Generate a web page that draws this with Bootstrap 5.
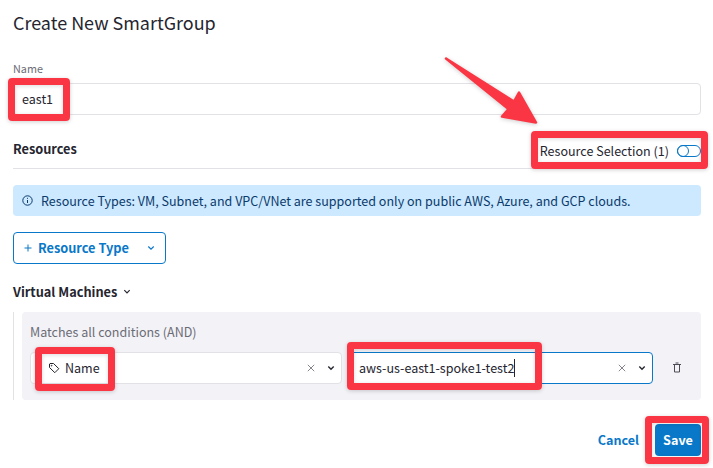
<!DOCTYPE html>
<html lang="en">
<head>
<meta charset="utf-8">
<title>Create New SmartGroup</title>
<link href="https://cdn.jsdelivr.net/npm/bootstrap@5.3.0/dist/css/bootstrap.min.css" rel="stylesheet">
<style>
body{font-family:"Noto Sans CJK SC","Noto Sans",sans-serif;font-size:12.54px;line-height:20px;color:#25252f;width:713px;height:468px;overflow:hidden;background:#fff}
.page{padding:7px 12px 0 13px}
.title{font-size:17.95px;line-height:30px;font-weight:400;margin:0}
.field-label{font-size:10.8px;line-height:16px;color:#6c6c75;margin:23px 0 7px;display:block}
.box-input{height:32px;border:1px solid #e1e1e6;border-radius:4px;padding:0 8px;background:#fff;color:#25252f}
.section-head{height:54px;border-bottom:1px solid #e1e1e6;padding-top:24px}
.section-head .fw-bold,.vm-head,.btn-type{font-size:12.75px}
.selection{margin-top:2px}
.notice{height:31px;margin:16px 0 16px;padding:0 9px;background:#cce9ff;color:#0b3a6b;border:0;border-radius:4px}
.btn-type{width:153px;height:32px;border:1px solid #0a78c8;color:#0a78c8;border-radius:4px;padding:0 10px;line-height:20px}
.btn-type span{margin-left:6px}
.vm-head{height:20px;margin:18px 0 10px}
.vm-head span{margin-right:6px}
.vm-body{height:88px;border-left:1px solid #e1e1e6;padding-left:8px}
.panel{height:88px;background:#f2f2f7;border-radius:4px;padding:10px 8px 0}
.panel-text{color:#6c6c75;margin-bottom:10px}
.key-box{width:312px;margin-right:8px;padding-left:17px}
.key-box,.value-box{padding-right:6px}
.value-box{width:303px}
.value-box.box-input{border-color:#0a78c8}
.key-box span{margin-left:5px}
.clear-x{color:#85858d;margin-right:12px}
.caret{width:1px;height:18px;background:#25252f}
.trash{margin-left:20px;color:#4b4b54}
.foot{margin-top:24px;height:32px}
.foot .btn{font-size:12.6px;line-height:20px;border:0;border-radius:4px;height:32px}
.btn-cancel{color:#0a78c8;padding:0;margin-right:16px}
.btn-save,.btn-save:hover{background:#0a78c8;color:#fff;width:46px;padding:0}
svg{display:block;flex:none;fill:none;stroke:currentColor}
.mark-box{position:absolute;border:7px solid #fb3644;border-radius:4px;box-shadow:0 1px 4px rgba(0,0,0,.18),inset 0 1px 4px rgba(0,0,0,.14)}
.m1{left:8px;top:78px;width:61.500px;height:43px}
.m2{left:530.600px;top:131px;width:177.500px;height:38px}
.m3{left:35px;top:347px;width:79.600px;height:43.500px}
.m4{left:347px;top:342px;width:194.500px;height:48px}
.m5{left:645px;top:415.500px;width:64px;height:48.500px}
.arrow{position:absolute;left:440px;top:50px;filter:drop-shadow(0 1px 2px rgba(0,0,0,.2))}
</style>
</head>
<body>
<main class="page">
  <h1 class="title">Create New SmartGroup</h1>
  <label class="field-label">Name</label>
  <div class="box-input d-flex align-items-center">east1</div>
  <div class="section-head d-flex align-items-start justify-content-between">
    <span class="fw-bold">Resources</span>
    <div class="selection d-flex align-items-center gap-2"><span>Resource Selection (1)</span>
      <svg width="24" height="12" viewBox="0 0 24 12"><g stroke="#0a78c8"><rect x=".5" y=".5" width="23" height="11" rx="5.5"/><circle cx="6" cy="6" r="5.5"/></g></svg>
    </div>
  </div>
  <div class="notice d-flex align-items-center">
    <svg width="11" height="11" viewBox="0 0 11 11"><circle cx="5.5" cy="5.5" r="4.7"/><path d="M5.5 5v3M5.5 2.8v1"/></svg>
    <span class="ms-2">Resource Types: VM, Subnet, and VPC/VNet are supported only on public AWS, Azure, and GCP clouds.</span>
  </div>
  <button class="btn btn-type d-flex align-items-center fw-bold">
    <svg width="8" height="8" viewBox="0 0 8 8"><path d="M4 .5v7M.5 4h7"/></svg>
    <span class="me-auto">Resource Type</span>
    <svg width="8" height="6" viewBox="0 0 8 6"><path d="M1.3 1.5 4 4.2l2.700-2.700" stroke-width="1.200"/></svg>
  </button>
  <div class="vm-head d-flex align-items-center fw-bold"><span>Virtual Machines</span>
    <svg width="8" height="6" viewBox="0 0 8 6"><path d="M1.3 1.2 4 3.900l2.700-2.700" stroke-width="1.200"/></svg>
  </div>
  <div class="vm-body">
    <div class="panel">
      <div class="panel-text">Matches all conditions (AND)</div>
      <div class="d-flex align-items-center">
        <div class="box-input key-box d-flex align-items-center">
          <svg width="12" height="12" viewBox="0 0 12 12" stroke-linejoin="round"><path d="M1.500 2v3.500l5.300 5.200 4-4L5.500 1.500H2Z"/><circle cx="3.600" cy="3.700" r=".4"/></svg>
          <span class="me-auto">Name</span>
          <svg class="clear-x" width="8" height="8" viewBox="0 0 8 8"><path d="m.8.8 6.400 6.400M7.200.8.8 7.200"/></svg>
          <svg width="8" height="6" viewBox="0 0 8 6" stroke-width="1.400"><path d="M1.300 1.500 4 4.200l2.700-2.700"/></svg>
        </div>
        <div class="box-input value-box d-flex align-items-center">
          <span>aws-us-east1-spoke1-test2</span><span class="caret me-auto"></span>
          <svg class="clear-x" width="8" height="8" viewBox="0 0 8 8"><path d="m.8.8 6.400 6.400M7.200.8.8 7.200"/></svg>
          <svg width="8" height="6" viewBox="0 0 8 6" stroke-width="1.400"><path d="M1.300 1.500 4 4.200l2.700-2.700"/></svg>
        </div>
        <svg class="trash" width="8" height="12" viewBox="0 0 8 12"><path d="M0 2.500h8M2.500 1h3M1.500 2.500v7.500h5v-7.500"/></svg>
      </div>
    </div>
  </div>
  <div class="foot d-flex align-items-center justify-content-end">
    <button class="btn btn-cancel fw-bold">Cancel</button>
    <button class="btn btn-save fw-bold">Save</button>
  </div>
</main>
<div class="mark-box m1"></div><div class="mark-box m2"></div><div class="mark-box m3"></div><div class="mark-box m4"></div><div class="mark-box m5"></div>
<svg class="arrow" width="104" height="80" viewBox="440 50 104 80"><path d="M446 58.500 514 101.500 519 92.500 536 122.500 502 116.500 508.500 109Z" fill="#fb3644" stroke="#fb3644" stroke-width="2.500" stroke-linejoin="round"/></svg>
<script src="https://cdn.jsdelivr.net/npm/bootstrap@5.3.0/dist/js/bootstrap.bundle.min.js"></script>
</body>
</html>
